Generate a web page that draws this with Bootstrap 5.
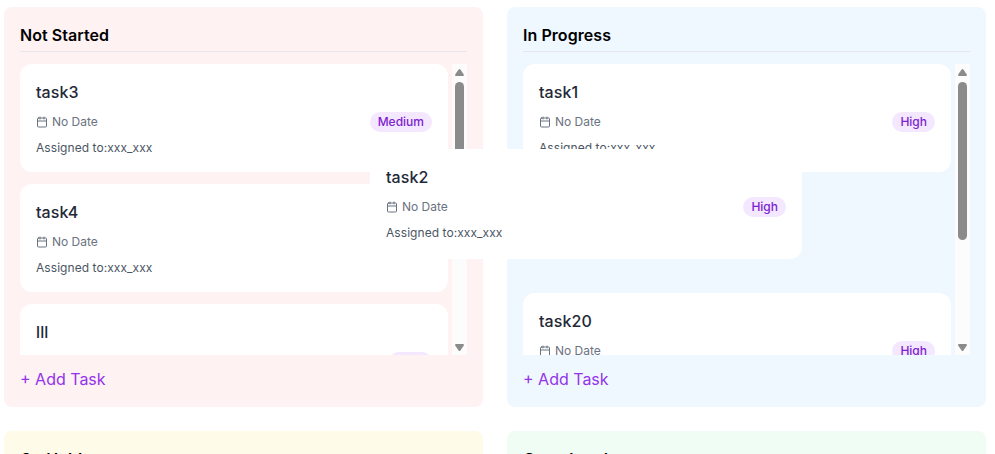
<!DOCTYPE html>
<html lang="en">
<head>
<meta charset="utf-8">
<meta name="viewport" content="width=device-width, initial-scale=1">
<title>Task board</title>
<link href="https://cdn.jsdelivr.net/npm/bootstrap@5.3.0/dist/css/bootstrap.min.css" rel="stylesheet">
<style>
body { font-family: Inter, sans-serif; color: #000; height: 454px; overflow: hidden; }
.board { display: grid; grid-template-columns: 479px 479px; grid-template-rows: 400px 23px; gap: 24px; padding: 7px 0 0 4px; }
.lane { border-radius: 8px; }
.lane-red { background: #fef2f2; }
.lane-blue { background: #f0f8ff; }
.lane-yellow { background: #fefce8; }
.lane-green { background: #f0fdf4; }
.lane-cut { border-bottom-left-radius: 0; border-bottom-right-radius: 0; overflow: hidden; }
.lane-title { font-size: 16px; line-height: 24px; font-weight: 600; letter-spacing: .06px; padding-bottom: 4px; margin-bottom: 12px; border-bottom: 1px solid #e5e7eb; }
.lane-body { height: 291px; gap: 4px; }
.lane-list { gap: 12px; }
.task { background: #fff; border-radius: 12px; padding: 16px; }
.task-title { font-size: 16px; line-height: 24px; font-weight: 500; letter-spacing: .1px; color: #1f2937; margin-bottom: 8px; }
.task-meta { height: 20px; font-size: 12px; line-height: 16px; color: #6b7280; margin-bottom: 8px; }
.task-meta svg { margin-right: 4px; }
.task-who { font-size: 12px; line-height: 16px; letter-spacing: .06px; color: #4b5563; }
.level { background: #f3e8ff; color: #7e22ce; font-weight: 500; padding: 2px 8px; }
.drop-slot { height: 97px; }
.add-task { font-size: 16px; line-height: 24px; color: #9333ea; margin-top: 12px; }
.track { width: 15px; background: #fcfcfc; padding: 5px 3px 4px; }
.thumb { width: 9px; height: 158px; border-radius: 5px; background: #8b8b8b; margin-top: 6px; }
.task-drag { left: 370px; top: 149px; width: 432px; height: 110px; }
</style>
</head>
<body>
<svg class="d-none">
  <symbol id="cal" viewBox="0 0 24 24"><path d="M5 4h14a2 2 0 0 1 2 2v14a2 2 0 0 1-2 2H5a2 2 0 0 1-2-2V6a2 2 0 0 1 2-2zM16 2v4M8 2v4M3 10h18" fill="none" stroke="#6b7280" stroke-width="2" stroke-linecap="round" stroke-linejoin="round"/></symbol>
  <symbol id="up" viewBox="0 0 9 7"><path d="M3.6.6Q4.5-.4 5.4.6L8.8 5.6Q9.2 7 8 7H1Q-.2 7 .2 5.6z" fill="#8b8b8b"/></symbol>
  <symbol id="down" viewBox="0 0 9 7"><path d="M3.6 6.4Q4.5 7.4 5.4 6.4L8.8 1.4Q9.2 0 8 0H1Q-.2 0 .2 1.4z" fill="#8b8b8b"/></symbol>
</svg>
<main class="board">
  <section class="lane lane-red p-3">
    <h2 class="lane-title">Not Started</h2>
    <div class="lane-body d-flex overflow-hidden">
      <div class="lane-list d-flex flex-column flex-grow-1">
        <article class="task">
          <h3 class="task-title">task3</h3>
          <div class="task-meta d-flex align-items-center"><svg width="12" height="12"><use href="#cal"/></svg><span>No Date</span><span class="level rounded-pill ms-auto">Medium</span></div>
          <div class="task-who">Assigned to:xxx_xxx</div>
        </article>
        <article class="task">
          <h3 class="task-title">task4</h3>
          <div class="task-meta d-flex align-items-center"><svg width="12" height="12"><use href="#cal"/></svg><span>No Date</span></div>
          <div class="task-who">Assigned to:xxx_xxx</div>
        </article>
        <article class="task">
          <h3 class="task-title">lll</h3>
          <div class="task-meta d-flex align-items-center"><svg width="12" height="12"><use href="#cal"/></svg><span class="level rounded-pill ms-auto">High</span></div>
        </article>
      </div>
      <div class="track d-flex flex-column">
        <svg width="9" height="7"><use href="#up"/></svg>
        <div class="thumb"></div>
        <svg class="mt-auto" width="9" height="7"><use href="#down"/></svg>
      </div>
    </div>
    <div class="add-task">+ Add Task</div>
  </section>

  <section class="lane lane-blue p-3">
    <h2 class="lane-title">In Progress</h2>
    <div class="lane-body d-flex overflow-hidden">
      <div class="lane-list d-flex flex-column flex-grow-1">
        <article class="task">
          <h3 class="task-title">task1</h3>
          <div class="task-meta d-flex align-items-center"><svg width="12" height="12"><use href="#cal"/></svg><span>No Date</span><span class="level rounded-pill ms-auto">High</span></div>
          <div class="task-who">Assigned to:xxx_xxx</div>
        </article>
        <div class="drop-slot flex-shrink-0"></div>
        <article class="task">
          <h3 class="task-title">task20</h3>
          <div class="task-meta d-flex align-items-center"><svg width="12" height="12"><use href="#cal"/></svg><span>No Date</span><span class="level rounded-pill ms-auto">High</span></div>
        </article>
      </div>
      <div class="track d-flex flex-column">
        <svg width="9" height="7"><use href="#up"/></svg>
        <div class="thumb"></div>
        <svg class="mt-auto" width="9" height="7"><use href="#down"/></svg>
      </div>
    </div>
    <div class="add-task">+ Add Task</div>
  </section>

  <section class="lane lane-cut lane-yellow px-3 pt-3"><h2 class="lane-title">On Hold</h2></section>
  <section class="lane lane-cut lane-green px-3 pt-3"><h2 class="lane-title">Completed</h2></section>
</main>

<article class="task task-drag position-absolute">
  <h3 class="task-title">task2</h3>
  <div class="task-meta d-flex align-items-center"><svg width="12" height="12"><use href="#cal"/></svg><span>No Date</span><span class="level rounded-pill ms-auto">High</span></div>
  <div class="task-who">Assigned to:xxx_xxx</div>
</article>
<script src="https://cdn.jsdelivr.net/npm/bootstrap@5.3.0/dist/js/bootstrap.bundle.min.js"></script>
</body>
</html>
